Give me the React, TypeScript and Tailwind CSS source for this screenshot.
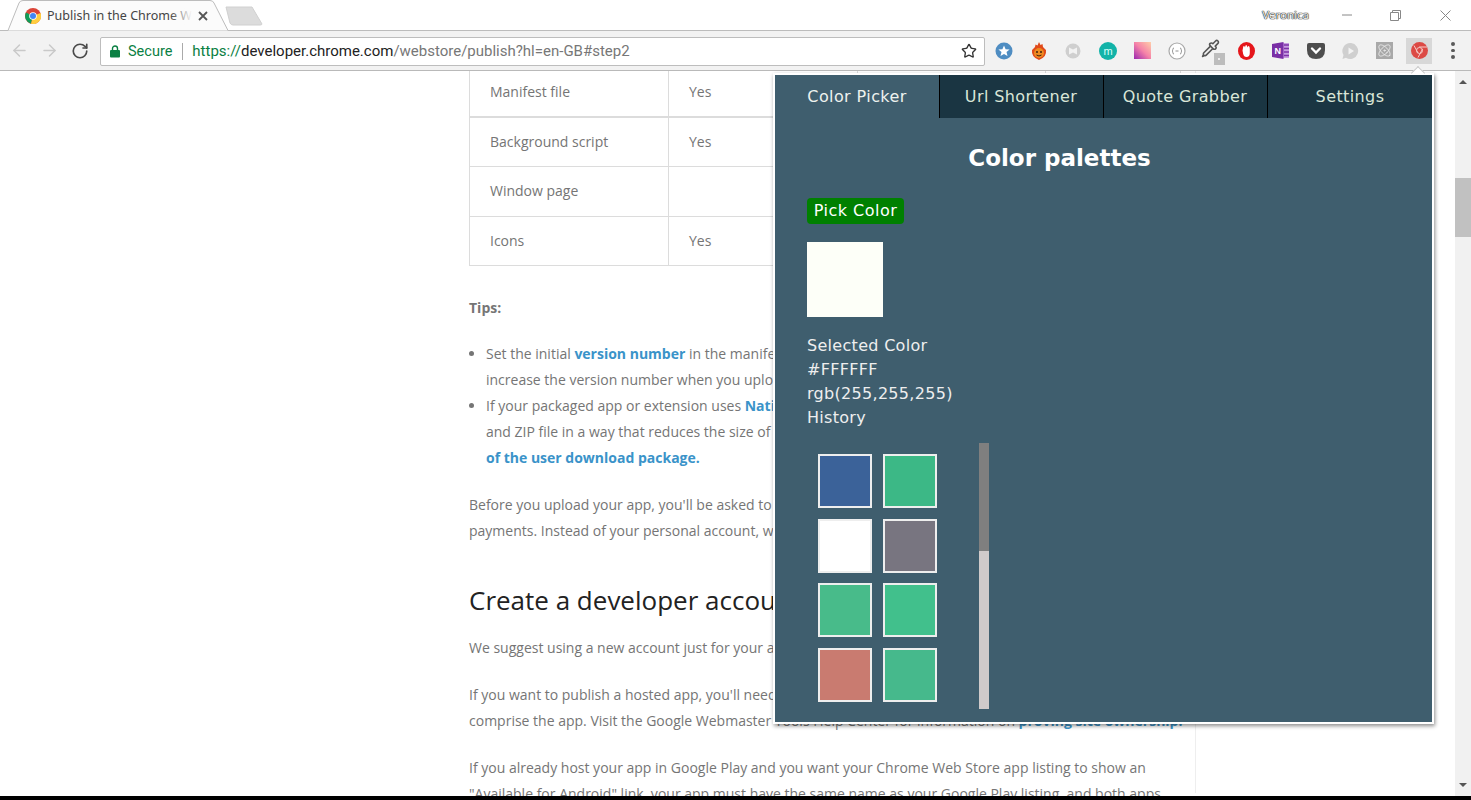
import { ArrowLeft, ArrowRight, Atom, Pipette, RotateCw, Star } from "lucide-react";

const swatches = ["#3b6299", "#3cb886", "#ffffff", "#787580", "#48bb8a", "#41c08c", "#c97b70", "#46b98c"];

const tabs = ["Color Picker", "Url Shortener", "Quote Grabber", "Settings"];

function ChromeLogo() {
  return (
    <svg className="mt-[2px]" width="16" height="16" viewBox="0 0 16 16">
      <circle cx="8" cy="8" r="8" fill="#db4437" />
      <path d="M8 8 L1 4.5 A8 8 0 0 0 6 15.8 Z" fill="#0f9d58" />
      <path d="M8 8 L15.5 5 A8 8 0 0 1 6 15.8 Z" fill="#ffcd40" />
      <circle cx="8" cy="8" r="3.8" fill="#fff" />
      <circle cx="8" cy="8" r="3" fill="#4285f4" />
    </svg>
  );
}

function TabShape() {
  return (
    <svg className="absolute left-0 top-0" width="240" height="31" viewBox="0 0 240 31">
      <path d="M0 30.5 H8 L19 3 Q20 0.5 23 0.5 H210 Q213 0.5 214 3 L228 30.5 H240" fill="#fbfbfb" stroke="#bcbcbc" />
    </svg>
  );
}

function ToolbarIcons() {
  return (
    <div className="flex items-center gap-0 ml-[2px]">
      <Slot>
        <svg width="18" height="18" viewBox="0 0 18 18">
          <circle cx="9" cy="9" r="8.5" fill="#4f8dc2" />
          <path d="M9 3.5 L10.6 7.2 L14.6 7.5 L11.5 10.1 L12.5 14 L9 11.9 L5.5 14 L6.5 10.1 L3.4 7.5 L7.4 7.2 Z" fill="#fff" />
        </svg>
      </Slot>
      <Slot>
        <svg width="16" height="18" viewBox="0 0 16 18">
          <path d="M8 0 L9.5 3 L11.5 2 L12 5 L15 8 Q16 15 8 18 Q0 15 1 8 L4 5 L4.5 2.5 L6.5 3.5 Z" fill="#e04a1a" />
          <circle cx="8" cy="11" r="5" fill="#ee8a20" />
          <circle cx="6" cy="10" r="1" fill="#40210f" />
          <circle cx="10" cy="10" r="1" fill="#40210f" />
          <path d="M5.5 13 Q8 15 10.5 13" stroke="#40210f" fill="none" />
        </svg>
      </Slot>
      <Slot>
        <svg width="16" height="16" viewBox="0 0 16 16">
          <circle cx="8" cy="8" r="7.5" fill="#cfcfcf" />
          <path d="M4 4.5 L8 6.5 L12 4.5 V11.5 L8 9.5 L4 11.5 Z" fill="#f2f2f2" />
        </svg>
      </Slot>
      <Slot>
        <svg width="18" height="18" viewBox="0 0 18 18">
          <circle cx="9" cy="9" r="9" fill="#12b3a8" />
          <text x="9" y="12.5" textAnchor="middle" fontSize="11" fill="#d8fff8" fontFamily="Liberation Sans, sans-serif">m</text>
        </svg>
      </Slot>
      <Slot>
        <svg width="17" height="17" viewBox="0 0 17 17">
          <defs>
            <linearGradient id="pal" x1="1" y1="0" x2="0" y2="1">
              <stop offset="0" stopColor="#ffcfa8" />
              <stop offset="0.5" stopColor="#f582a8" />
              <stop offset="1" stopColor="#9b27af" />
            </linearGradient>
          </defs>
          <rect width="17" height="17" fill="url(#pal)" />
        </svg>
      </Slot>
      <Slot>
        <svg width="18" height="18" viewBox="0 0 18 18">
          <circle cx="9" cy="9" r="8" fill="#fff" stroke="#a8a8a8" strokeWidth="1.2" />
          <path d="M6 6 Q4.8 6 4.8 7.5 V8.2 L4 9 L4.8 9.8 V10.5 Q4.8 12 6 12 M12 6 Q13.2 6 13.2 7.5 V8.2 L14 9 L13.2 9.8 V10.5 Q13.2 12 12 12 M7.5 9 H10.5" fill="none" stroke="#909090" />
        </svg>
      </Slot>
      <Slot>
        <div className="relative w-[24px] h-[26px]">
          <Pipette size={19} className="absolute left-[1px] top-[1px] text-[#555]" strokeWidth={2} />
          <div className="absolute left-[14px] top-[15px] w-[11px] h-[12px] bg-[#bdbdbd] flex items-center justify-center">
            <div className="w-[2px] h-[2px] bg-[#eee]" />
          </div>
        </div>
      </Slot>
      <Slot>
        <svg width="17" height="18" viewBox="0 0 17 18">
          <ellipse cx="8.5" cy="9" rx="8.5" ry="9" fill="#e5161b" />
          <path d="M5 6 Q5 4 6 4 Q6.8 4 7 5.5 Q7.2 3 8.2 3 Q9.2 3 9.4 5.5 Q9.8 3.8 10.8 4 Q11.8 4.4 11.8 7 V11 Q11.8 15 8.5 15 Q5.8 15 5.2 12 L4.5 8.5 Z" fill="#fff" />
        </svg>
      </Slot>
      <Slot>
        <svg width="18" height="17" viewBox="0 0 18 17">
          <rect x="5" y="1" width="12" height="15" fill="#c79be0" />
          <path d="M12 3 H17 M12 6.5 H17 M12 10 H17 M12 13.5 H17" stroke="#7d32a8" strokeWidth="1.4" />
          <path d="M0 2 L11.5 0 V17 L0 15 Z" fill="#7a2fa6" />
          <text x="5.7" y="12" textAnchor="middle" fontSize="9" fontWeight="700" fill="#fff" fontFamily="Liberation Sans, sans-serif">N</text>
        </svg>
      </Slot>
      <Slot>
        <svg width="18" height="16" viewBox="0 0 18 16">
          <path d="M2 0 H16 Q18 0 18 2 V7 Q18 16 9 16 Q0 16 0 7 V2 Q0 0 2 0 Z" fill="#4e4e4e" />
          <path d="M5 5.5 L9 9.5 L13 5.5" stroke="#fff" strokeWidth="2.4" fill="none" strokeLinecap="round" />
        </svg>
      </Slot>
      <Slot>
        <svg width="18" height="18" viewBox="0 0 18 18">
          <path d="M10 1 A8 8 0 1 1 5 15.8 L1.5 17 L2.5 13 A8 8 0 0 1 10 1 Z" fill="#cfcfcf" />
          <path d="M7.5 5.5 L13 9 L7.5 12.5 Z" fill="#f2f2f2" />
        </svg>
      </Slot>
      <Slot>
        <div className="w-[17px] h-[17px] bg-[#a9a9a9] flex items-center justify-center">
          <Atom size={15} className="text-[#eee]" strokeWidth={1.4} />
        </div>
      </Slot>
      <div className="w-[26px] h-[26px] ml-[4px] mr-[4px] bg-[#d8d8d8] flex items-center justify-center">
        <svg width="17" height="17" viewBox="0 0 17 17">
          <circle cx="8.5" cy="8.5" r="8.5" fill="#dc4a45" />
          <path d="M3 3.5 L7 11 M8 5 H16 M11.5 7 L7 15.5" stroke="#f6c9c6" strokeWidth="1" fill="none" />
          <circle cx="8.5" cy="8.5" r="3" fill="none" stroke="#f6c9c6" strokeWidth="1" />
        </svg>
      </div>
      <div className="w-[24px] flex flex-col items-center gap-[3px] ml-[5px]">
        <span className="w-[3.5px] h-[3.5px] rounded-full bg-[#5a5a5a]" />
        <span className="w-[3.5px] h-[3.5px] rounded-full bg-[#5a5a5a]" />
        <span className="w-[3.5px] h-[3.5px] rounded-full bg-[#5a5a5a]" />
      </div>
    </div>
  );
}

function Slot({ children }: { children: React.ReactNode }) {
  return <div className="w-[34.6px] h-[26px] flex items-center justify-center shrink-0">{children}</div>;
}

function TableRow({ name, value, first }: { name: string; value: string; first?: boolean }) {
  return (
    <div className={`flex border-[#dcdcdc] items-stretch ${first ? "h-[50px] border-b-[2.5px]" : "h-[49.5px] border-b-[1.5px]"}`}>
      <div className="w-[199px] pl-5 flex items-center border-r border-[#dcdcdc]">{name}</div>
      <div className="w-[189px] pl-5 flex items-center border-r border-[#dcdcdc]">{value}</div>
      <div className="w-[188px] border-r border-[#dcdcdc]" />
      <div className="flex-1" />
    </div>
  );
}

function PageContent() {
  const link = "font-bold text-[#3a93c9]";
  return (
    <div className="flex-1 min-w-0 overflow-hidden">
      <div className="ml-[469px] w-[727px] h-full border-r border-[#eee] font-['Open_Sans',sans-serif] text-[14px] leading-[26px] text-[#757575] whitespace-nowrap">
        <div className="w-[712px]">
          <div className="-mt-[3.5px] border-l border-[#dcdcdc] border-r">
            <TableRow first name="Manifest file" value="Yes" />
            <TableRow name="Background script" value="Yes" />
            <TableRow name="Window page" value="" />
            <TableRow name="Icons" value="Yes" />
          </div>
          <p className="mt-[29px] font-bold">Tips:</p>
          <ul className="mt-[20px] list-disc pl-[17px]">
            <li>
              Set the initial <span className={link}>version number</span> in the manifest to a low value (such as 0.0.0.1) so that you can
              <br />
              increase the version number when you upload new versions of your app.
            </li>
            <li>
              If your packaged app or extension uses <span className={link}>Native Client</span>, you can structure your app's directory hierarchy
              <br />
              and ZIP file in a way that reduces the size of the user download package. For details, see
              <br />
              <span className={link}>of the user download package.</span>
            </li>
          </ul>
          <p className="mt-[21px]">
            Before you upload your app, you'll be asked to pay a one-time developer registration fee to verify your account and
            <br />
            payments. Instead of your personal account, we suggest using a dedicated account.
          </p>
          <h2 className="mt-[38px] text-[26px] leading-[36px] text-[#222]">Create a developer account</h2>
          <p className="mt-[17px]">We suggest using a new account just for your app instead of your personal account.</p>
          <p className="mt-[21px]">
            If you want to publish a hosted app, you'll need to prove that you own the site and all the URLs that
            <br />
            comprise the app. Visit the Google Webmaster Tools Help Center for information on <span className={link}>proving site ownership.</span>
          </p>
          <p className="mt-[21px]">
            If you already host your app in Google Play and you want your Chrome Web Store app listing to show an
            <br />
            "Available for Android" link, your app must have the same name as your Google Play listing, and both apps
          </p>
        </div>
      </div>
    </div>
  );
}

function Popup() {
  return (
    <div className="absolute left-[773px] top-[73px] w-[661px] h-[651px] border-2 border-white shadow-[1px_2px_4px_rgba(0,0,0,0.45)] bg-[#3f5e6e] font-['DejaVu_Sans',sans-serif] text-[#eee]">
      <div className="absolute left-[638px] -top-[7px] w-[10px] h-[10px] rotate-45 bg-white border-t border-l border-[#c8c8c8]" />
      <div className="relative flex h-[43px] bg-[#1a3542]">
        {tabs.map((tab, i) => (
          <div
            key={tab}
            className={`w-[165px] -mr-[1px] flex items-center justify-center text-[16px] text-[#d9e6d8] tracking-[0.4px] border-r border-black last:border-r-0 last:flex-1 ${i === 0 ? "bg-[#3f5e6e] text-[#eef2ee]" : ""}`}
          >
            {tab}
          </div>
        ))}
      </div>
      <h1 className="mt-[23px] w-[569px] text-center text-[23px] leading-[34px] font-bold text-white">Color palettes</h1>
      <div className="pl-[32px]">
        <button className="mt-[23px] block w-[97px] h-[26px] rounded-[4px] bg-[#008000] text-[16px] tracking-[0.5px] text-white text-center">Pick Color</button>
        <div className="mt-[18px] w-[76px] h-[75px] bg-[#fdfff8]" />
        <div className="mt-[17px] text-[16px] leading-[24px] tracking-[0.3px]">
          <div>Selected Color</div>
          <div>#FFFFFF</div>
          <div>rgb(255,255,255)</div>
          <div>History</div>
        </div>
        <div className="mt-[13px] flex">
          <div className="ml-[11px] mt-[11px] w-[118px] grid grid-cols-2 gap-x-[11px] gap-y-[10.7px] content-start">
            {swatches.map((color, i) => (
              <div key={i} className="w-[54px] h-[54px] border-2 border-[#eeeeee]" style={{ backgroundColor: color }} />
            ))}
          </div>
          <div className="ml-[43px] w-[10px] h-[266px] bg-[#cfcaca]">
            <div className="h-[108px] bg-[#7f7f7f]" />
          </div>
        </div>
      </div>
    </div>
  );
}

export default function App() {
  return (
    <div className="relative h-[800px] w-full overflow-hidden flex flex-col bg-black">
      <div className="flex-1 min-h-0 flex flex-col bg-white">
        <div className="relative h-[31px] shrink-0 bg-white border-b border-[#bcbcbc] font-['Noto_Sans',sans-serif]">
          <TabShape />
          <div className="relative flex items-center h-[30px] pl-[25px]">
            <ChromeLogo />
            <div className="relative ml-[6px] mt-[2px] w-[145px] overflow-hidden whitespace-nowrap text-[12.5px] text-[#444]">
              Publish in the Chrome Web Store
              <div className="absolute right-0 top-0 h-full w-[22px] bg-gradient-to-r from-transparent to-[#fbfbfb]" />
            </div>
            <svg className="ml-[6px] mt-[2px]" width="10" height="10" viewBox="0 0 10 10">
              <path d="M1 1 L9 9 M9 1 L1 9" stroke="#555" strokeWidth="1.8" />
            </svg>
            <svg className="ml-[17px] mt-[1px]" width="38" height="20" viewBox="0 0 38 20">
              <path d="M1 1 H27 L37 18 Q37 19 35 19 H8 Q6 19 5 17 Z" fill="#dcdcdc" stroke="#d0d0d0" />
            </svg>
            <div className="flex-1" />
            <span className="text-[11.5px] text-[#eee] [text-shadow:0_0_1px_#222,0_0_1px_#222,0_0_1px_#222] mr-[33px]">Veronica</span>
            <svg width="10" height="10" viewBox="0 0 10 10" className="mr-[38px]">
              <path d="M0 5 H10" stroke="#888" />
            </svg>
            <svg width="11" height="11" viewBox="0 0 11 11" className="mr-[39px]">
              <path d="M0.5 2.5 H8.5 V10.5 H0.5 Z M2.5 2.5 V0.5 H10.5 V8.5 H8.5" fill="none" stroke="#888" />
            </svg>
            <svg width="11" height="11" viewBox="0 0 11 11" className="mr-[20px]">
              <path d="M0.5 0.5 L10.5 10.5 M10.5 0.5 L0.5 10.5" stroke="#888" />
            </svg>
          </div>
        </div>
        <div className="h-[40px] shrink-0 bg-[#f2f2f2] border-b border-[#b9b9b9] flex items-center pl-[10px]">
          <ArrowLeft size={19} className="text-[#c9c9c9]" strokeWidth={1.8} />
          <ArrowRight size={19} className="ml-[11px] text-[#c9c9c9]" strokeWidth={1.8} />
          <RotateCw size={18} className="ml-[12px] text-[#4a4a4a]" strokeWidth={2.2} />
          <div className="ml-[11px] mt-[1px] w-[885px] h-[29px] bg-white border border-[#bdbdbd] rounded-[2px] flex items-center pl-[9px] font-['Roboto',sans-serif] text-[15px] whitespace-nowrap">
            <svg width="10" height="13" viewBox="0 0 10 13">
              <path d="M2.5 5 V3.5 A2.5 2.5 0 0 1 7.5 3.5 V5" fill="none" stroke="#0b8043" strokeWidth="1.4" />
              <rect y="5" width="10" height="7.5" rx="1" fill="#0b8043" />
            </svg>
            <span className="ml-[8px] mt-[2px] text-[14.5px] text-[#0b8043]">Secure</span>
            <span className="ml-[10px] w-px h-[17px] bg-[#aaa]" />
            <span className="ml-[9px] text-[#0b8043]">https://</span>
            <span className="text-[#222]">developer.chrome.com</span>
            <span className="text-[#777]">/webstore/publish?hl=en-GB#step2</span>
            <div className="flex-1" />
            <Star size={16} className="mr-[7px] text-[#333]" strokeWidth={2} />
          </div>
          <ToolbarIcons />
        </div>
        <div className="flex-1 min-h-0 flex overflow-hidden">
          <PageContent />
          <div className="relative w-[16px] shrink-0 bg-[#f1f1f1] flex flex-col items-center">
            <div className="mt-[9px] w-0 h-0 border-x-[4px] border-x-transparent border-b-[4px] border-b-[#555]" />
            <div className="mt-[94px] w-full h-[59px] bg-[#c1c1c1]" />
            <div className="flex-1" />
            <div className="mb-[9px] w-0 h-0 border-x-[4px] border-x-transparent border-t-[4px] border-t-[#555]" />
          </div>
        </div>
      </div>
      <div className="h-[4px] shrink-0 bg-black" />
      <Popup />
    </div>
  );
}
